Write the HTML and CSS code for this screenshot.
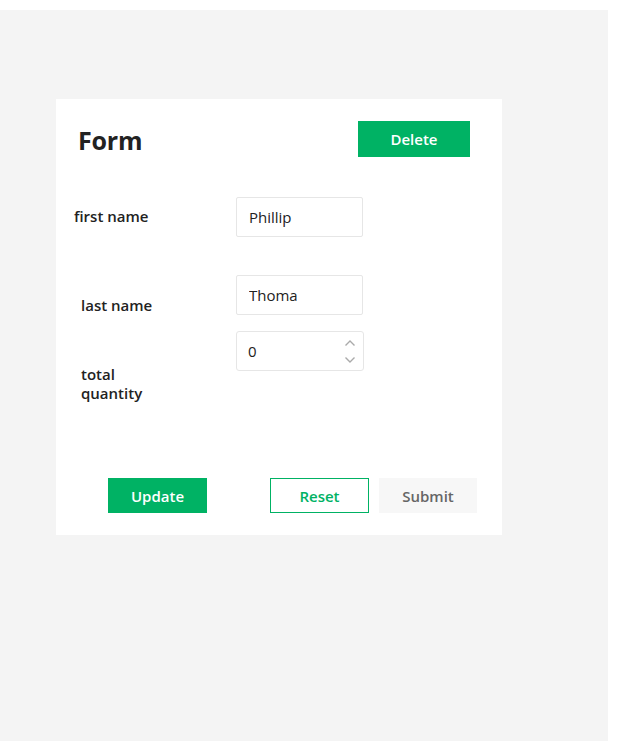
FILE: index.html
```html
<!DOCTYPE html>
<html lang="en">
<head>
    <meta charset="UTF-8">
    <meta name="viewport" content="width=device-width, initial-scale=1.0">
    <title>Form</title>
    <link rel="stylesheet" href="styles.css">
</head>
<body>
    <div class="stage">
        <form class="card" id="itemForm">
            <div class="card-head">
                <h2>Form</h2>
                <button type="button" class="btn btn-primary btn-delete">Delete</button>
            </div>

            <div class="field field-first">
                <label for="firstName">first name</label>
                <input type="text" id="firstName" class="text-box" value="Phillip">
            </div>
            <div class="field field-last">
                <label for="lastName">last name</label>
                <input type="text" id="lastName" class="text-box" value="Thoma">
            </div>
            <div class="field field-qty">
                <label for="quantity">total quantity</label>
                <div class="number-box">
                    <input type="number" id="quantity" value="0">
                    <div class="stepper">
                        <svg width="12" height="8" viewBox="0 0 12 8"><path d="M1.5 6.5 L6 2 L10.5 6.5" fill="none" stroke="#aaa" stroke-width="1.4"/></svg>
                        <svg width="12" height="8" viewBox="0 0 12 8"><path d="M1.5 1.5 L6 6 L10.5 1.5" fill="none" stroke="#aaa" stroke-width="1.4"/></svg>
                    </div>
                </div>
            </div>

            <div class="actions">
                <button type="button" class="btn btn-primary">Update</button>
                <div class="actions-right">
                    <button type="reset" class="btn btn-outline">Reset</button>
                    <button type="submit" class="btn btn-muted">Submit</button>
                </div>
            </div>
        </form>
    </div>
</body>
</html>
```

FILE: styles.css
```css
body {
    margin: 0;
    background: white;
    font-family: "Open Sans", "Noto Sans", Arial, sans-serif;
    color: #222;
}
.stage {
    margin-top: 10px;
    width: 608px;
    height: 731px;
    background-color: #f4f4f4;
    padding-top: 89px;
    box-sizing: border-box;
}
.card {
    margin-left: 56px;
    width: 446px;
    height: 436px;
    box-sizing: border-box;
    background-color: white;
    padding: 22px 32px 0 18px;
}
.card-head {
    display: flex;
    justify-content: space-between;
    align-items: flex-start;
    height: 76px;
}
.card-head h2 {
    margin: 3px 0 0 4px;
    font-size: 25px;
    font-weight: 700;
    line-height: 32px;
    letter-spacing: -0.2px;
}
.btn {
    font-family: inherit;
    font-size: 15px;
    font-weight: 600;
    height: 35px;
    width: 99px;
    border: none;
    padding: 0;
    cursor: pointer;
}
.btn-primary {
    background-color: #00b264;
    color: white;
}
.btn-delete {
    width: 112px;
    height: 36px;
}
.btn-outline {
    background-color: white;
    color: #00b264;
    border: 1px solid #00b264;
}
.btn-muted {
    background-color: #f7f7f7;
    color: #666;
    width: 98px;
}
.field {
    display: grid;
    grid-template-columns: 162px auto;
    align-items: start;
}
.field label {
    font-size: 15px;
    font-weight: 600;
    line-height: 19px;
    width: 90px;
}
.field-first label {
    margin-top: 10px;
}
.field-last {
    margin-top: 38px;
}
.field-last label {
    margin: 21px 0 0 7px;
}
.field-qty {
    margin-top: 16px;
}
.field-qty label {
    margin: 34px 0 0 7px;
}
.text-box {
    width: 127px;
    height: 40px;
    box-sizing: border-box;
    border: 1px solid #e6e6e6;
    border-radius: 2px;
    padding: 0 12px;
    font-family: inherit;
    font-size: 15px;
    color: #222;
    outline: none;
}
.number-box {
    display: flex;
    align-items: center;
    width: 128px;
    height: 40px;
    box-sizing: border-box;
    border: 1px solid #e6e6e6;
    border-radius: 3px;
}
.number-box input {
    flex: 1;
    min-width: 0;
    border: none;
    outline: none;
    padding: 0 0 0 11px;
    font-family: inherit;
    font-size: 15px;
    color: #222;
    -moz-appearance: textfield;
    appearance: textfield;
}
.number-box input::-webkit-inner-spin-button,
.number-box input::-webkit-outer-spin-button {
    -webkit-appearance: none;
    margin: 0;
}
.stepper {
    display: flex;
    flex-direction: column;
    gap: 9px;
    padding-right: 7px;
}
.actions {
    display: flex;
    margin-top: 75px;
    padding-left: 34px;
    justify-content: space-between;
}
.actions-right {
    display: flex;
    gap: 10px;
    margin-right: -7px;
}
```
